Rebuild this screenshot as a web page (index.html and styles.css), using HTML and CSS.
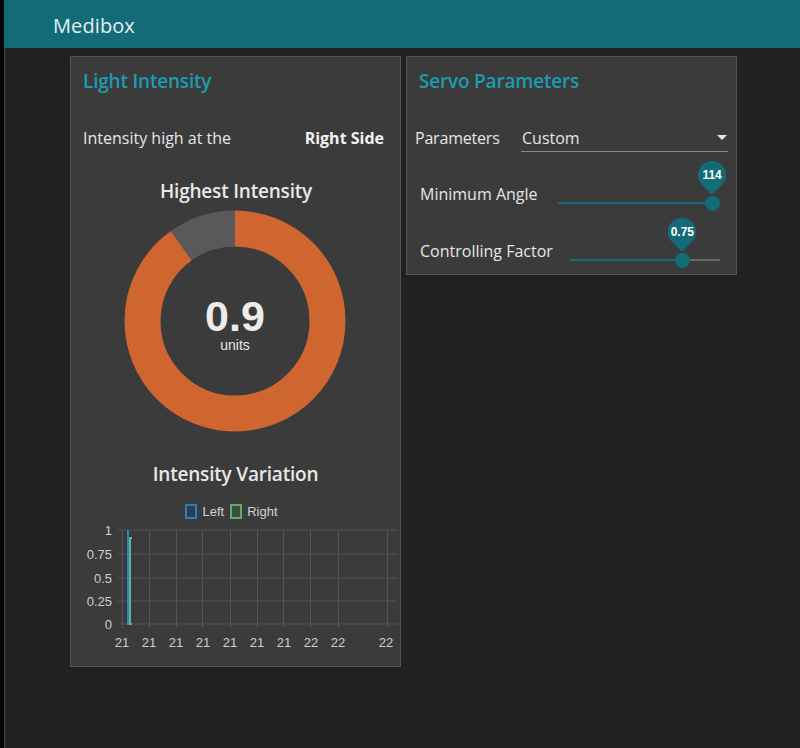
FILE: index.html
```html
<!DOCTYPE html>
<html>
<head>
<meta charset="utf-8">
<link rel="stylesheet" href="styles.css">
</head>
<body>
<div class="page">
  <header class="topbar"><span class="brand">Medibox</span></header>
  <main class="content">
    <section class="card card-light">
      <h2 class="card-title">Light Intensity</h2>
      <div class="text-row">
        <span class="label">Intensity high at the</span>
        <span class="value">Right Side</span>
      </div>
      <h3 class="widget-title gauge-title">Highest Intensity</h3>
      <div class="donut-wrap">
        <svg class="donut" width="222" height="222" viewBox="0 0 222 222">
          <g transform="rotate(-90 111 111)">
            <circle cx="111" cy="111" r="92.5" fill="none" stroke="#d0662f" stroke-width="36" stroke-dasharray="523.1 600"/>
            <circle cx="111" cy="111" r="92.5" fill="none" stroke="#595959" stroke-width="36" stroke-dasharray="58.1 600" stroke-dashoffset="-523.1"/>
          </g>
          <text class="donut-value" x="111" y="121" text-anchor="middle">0.9</text>
          <text class="donut-units" x="111" y="140" text-anchor="middle">units</text>
        </svg>
      </div>
      <h3 class="widget-title chart-title">Intensity Variation</h3>
      <div class="legend">
        <span class="legend-box legend-left"></span><span class="legend-text">Left</span>
        <span class="legend-box legend-right"></span><span class="legend-text">Right</span>
      </div>
      <svg class="chart" width="331" height="140" viewBox="0 0 331 140">
        <g class="grid">
          <line x1="47" y1="10" x2="326" y2="10"/>
          <line x1="47" y1="34" x2="326" y2="34"/>
          <line x1="47" y1="58" x2="326" y2="58"/>
          <line x1="47" y1="81" x2="326" y2="81"/>
          <line x1="47" y1="104" x2="326" y2="104"/>
          <line x1="51.5" y1="10" x2="51.5" y2="108"/>
          <line x1="78.5" y1="10" x2="78.5" y2="108"/>
          <line x1="105.5" y1="10" x2="105.5" y2="108"/>
          <line x1="131.5" y1="10" x2="131.5" y2="108"/>
          <line x1="159.5" y1="10" x2="159.5" y2="108"/>
          <line x1="186.5" y1="10" x2="186.5" y2="108"/>
          <line x1="212.5" y1="10" x2="212.5" y2="108"/>
          <line x1="239.5" y1="10" x2="239.5" y2="108"/>
          <line x1="267.5" y1="10" x2="267.5" y2="108"/>
          <line x1="316.5" y1="10" x2="316.5" y2="108"/>
        </g>
        <g class="ylabels">
          <text x="41" y="14.5">1</text>
          <text x="41" y="38.5">0.75</text>
          <text x="41" y="62.5">0.5</text>
          <text x="41" y="85.5">0.25</text>
          <text x="41" y="108.5">0</text>
        </g>
        <g class="xlabels">
          <text x="51" y="127">21</text>
          <text x="78" y="127">21</text>
          <text x="105" y="127">21</text>
          <text x="132" y="127">21</text>
          <text x="159" y="127">21</text>
          <text x="186" y="127">21</text>
          <text x="213" y="127">21</text>
          <text x="240" y="127">22</text>
          <text x="267" y="127">22</text>
          <text x="315" y="127">22</text>
        </g>
        <polyline class="series-left" points="57,10 57,104 60,104"/>
        <polyline class="series-right" points="61,18 59,18 59,104 61,104"/>
      </svg>
    </section>

    <section class="card card-servo">
      <h2 class="card-title">Servo Parameters</h2>
      <div class="field-row">
        <span class="field-label">Parameters</span>
        <div class="select">
          <span class="select-text">Custom</span>
          <span class="select-caret"></span>
        </div>
      </div>
      <div class="slider-row slider-row-first">
        <span class="slider-label">Minimum Angle</span>
        <div class="slider slider-angle">
          <div class="track"><div class="fill" style="width: 96%"></div></div>
          <div class="thumb" style="left: 96%"></div>
          <div class="pin" style="left: 96%"><span class="pin-text">114</span></div>
        </div>
      </div>
      <div class="slider-row">
        <span class="slider-label">Controlling Factor</span>
        <div class="slider slider-factor">
          <div class="track"><div class="fill" style="width: 75%"></div></div>
          <div class="thumb" style="left: 75%"></div>
          <div class="pin" style="left: 75%"><span class="pin-text">0.75</span></div>
        </div>
      </div>
    </section>
  </main>
</div>
</body>
</html>
```

FILE: styles.css
```css
* { box-sizing: border-box; }

html, body {
  margin: 0;
  padding: 0;
  height: 100%;
  background: #212121;
}

body {
  font-family: "Open Sans", "Noto Sans", sans-serif;
  color: #e6e6e6;
}

.page {
  min-height: 748px;
  border-left: 4px solid #050505;
  display: flex;
  flex-direction: column;
}

.topbar {
  height: 48px;
  background: #136b78;
  display: flex;
  align-items: center;
  padding-left: 49px;
  padding-top: 2px;
  flex-shrink: 0;
}

.brand {
  font-size: 20px;
  color: #e4f2f3;
  letter-spacing: 0.1px;
}

.content {
  flex: 1;
  border-left: 1px solid #4a4a4a;
  padding: 8px 0 0 65px;
  display: flex;
  align-items: flex-start;
  gap: 5px;
}

.card {
  width: 331px;
  background: #3c3b3b;
  border: 1px solid #535353;
}

.card-light {
  height: 611px;
}

.card-servo {
  height: 219px;
}

.card-title {
  margin: 0;
  padding: 11px 12px 0;
  height: 48px;
  font-size: 19px;
  font-weight: 600;
  line-height: 26px;
  color: #1a9cb2;
  letter-spacing: -0.2px;
}

.text-row {
  display: flex;
  justify-content: space-between;
  align-items: center;
  height: 30px;
  margin-top: 18px;
  padding: 0 16px 0 12px;
  font-size: 16px;
}

.text-row .label {
  color: #e6e6e6;
}

.text-row .value {
  font-weight: 700;
  color: #f2f2f2;
}

.widget-title {
  margin: 0;
  text-align: center;
  font-size: 19px;
  font-weight: 600;
  line-height: 24px;
  color: #e8e8e8;
  letter-spacing: -0.2px;
}

.gauge-title {
  margin-top: 26px;
  padding-left: 1px;
}

.donut-wrap {
  display: flex;
  justify-content: center;
  margin-top: 7px;
  height: 222px;
}

.donut {
  display: block;
  margin-left: -1px;
}

.donut-value {
  font-family: "Liberation Sans", Arial, sans-serif;
  font-weight: 700;
  font-size: 43px;
  fill: #ececec;
}

.donut-units {
  font-family: "Liberation Sans", Arial, sans-serif;
  font-size: 14px;
  fill: #e6e6e6;
}

.chart-title {
  margin-top: 30px;
}

.legend {
  display: flex;
  justify-content: center;
  align-items: center;
  height: 18px;
  margin-top: 16px;
  font-family: "Liberation Sans", Arial, sans-serif;
  font-size: 13px;
  color: #d2d2d2;
  padding-right: 8px;
}

.legend-box {
  display: inline-block;
  width: 12px;
  height: 15px;
  border: 2px solid;
  margin-right: 5px;
}

.legend-left {
  border-color: #2a7fc0;
  background: #2b3f52;
}

.legend-right {
  border-color: #6aa86a;
  background: #3c4f3c;
  margin-left: 6px;
}

.chart {
  display: block;
  margin-top: 0;
}

.grid line {
  stroke: #555555;
  stroke-width: 1;
}

.ylabels text {
  font-family: "Liberation Sans", Arial, sans-serif;
  font-size: 13px;
  fill: #cfcfcf;
  text-anchor: end;
}

.xlabels text {
  font-family: "Liberation Sans", Arial, sans-serif;
  font-size: 13px;
  fill: #cfcfcf;
  text-anchor: middle;
}

.series-left {
  fill: none;
  stroke: #2b86c8;
  stroke-width: 2;
}

.series-right {
  fill: none;
  stroke: #5fb58c;
  stroke-width: 2;
}

/* Servo card */
.field-row {
  display: flex;
  align-items: center;
  height: 32px;
  margin-top: 17px;
  padding-left: 8px;
  padding-right: 8px;
}

.field-label {
  width: 106px;
  font-size: 16px;
  color: #e6e6e6;
  letter-spacing: -0.2px;
}

.select {
  flex: 1;
  display: flex;
  align-items: center;
  justify-content: space-between;
  height: 28px;
  border-bottom: 1px solid #8a8a8a;
  padding-left: 1px;
  padding-right: 1px;
}

.select-text {
  font-size: 16px;
  color: #e6e6e6;
}

.select-caret {
  width: 0;
  height: 0;
  border-left: 5px solid transparent;
  border-right: 5px solid transparent;
  border-top: 5px solid #e6e6e6;
}

.slider-row {
  display: flex;
  align-items: center;
  height: 57px;
  padding-left: 13px;
}

.slider-row-first {
  margin-top: 11px;
}

.slider-label {
  font-size: 16px;
  color: #e6e6e6;
}

.slider {
  position: relative;
  height: 14px;
  margin-top: 18px;
  margin-left: 20px;
}

.slider-angle {
  width: 161px;
}

.slider-factor {
  width: 150px;
  margin-left: 17px;
}

.track {
  position: absolute;
  left: 0;
  right: 0;
  top: 6px;
  height: 2px;
  background: #6a6a6a;
}

.fill {
  height: 2px;
  background: #136b78;
}

.thumb {
  position: absolute;
  top: 0;
  width: 15px;
  height: 15px;
  margin-left: -7px;
  border-radius: 50%;
  background: #136b78;
}

.pin {
  position: absolute;
  top: -35px;
  width: 28px;
  height: 28px;
  margin-left: -14px;
  display: flex;
  align-items: center;
  justify-content: center;
}

.pin::before {
  content: "";
  position: absolute;
  left: 0;
  top: 0;
  width: 28px;
  height: 28px;
  background: #136b78;
  border-radius: 50% 50% 0 50%;
  transform: rotate(45deg);
}

.pin-text {
  position: relative;
  font-family: "Liberation Sans", Arial, sans-serif;
  font-size: 12px;
  font-weight: 700;
  color: #ffffff;
}
```
